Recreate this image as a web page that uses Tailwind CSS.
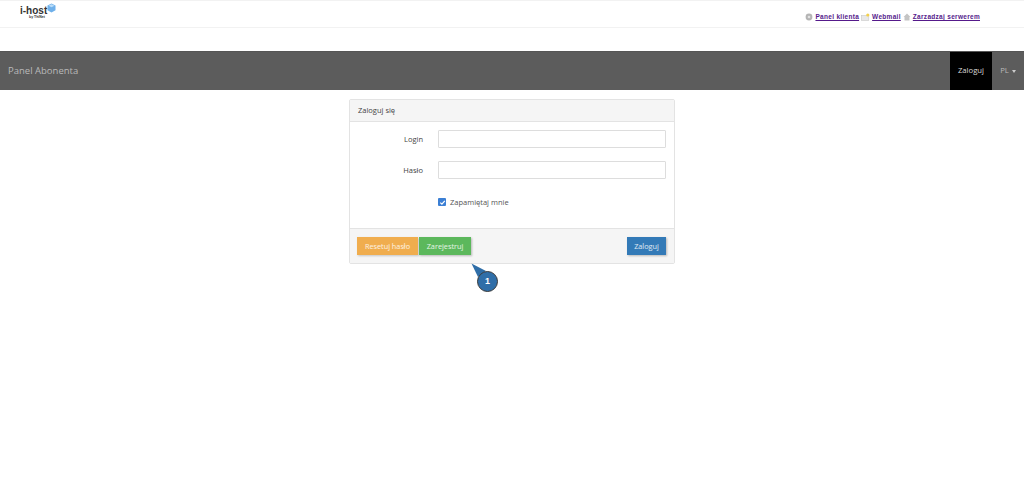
<!DOCTYPE html>
<html lang="en">
<head>
    <meta charset="UTF-8">
    <title>Panel Abonenta</title>
    <script src="https://cdn.jsdelivr.net/npm/@tailwindcss/browser@4"></script>
</head>
<body class="bg-white h-[478px] overflow-hidden font-['Open_Sans',sans-serif] text-[#333]">
    <!-- top strip -->
    <div class="h-[28px] border-y border-[#f2f2f2] flex justify-between">
        <div class="relative ml-[20px] w-[40px]">
            <span class="absolute left-0 top-[4px] font-['Liberation_Sans',sans-serif] font-bold text-[10px] leading-[12px] text-[#333]">i-host</span>
            <span class="absolute left-[9px] top-[14px] font-['Liberation_Sans',sans-serif] font-bold text-[3.5px] leading-[4px] text-[#333] whitespace-nowrap">by ThiNet</span>
            <svg class="absolute left-[27px] top-[2px]" width="9" height="10" viewBox="0 0 9 10">
                <path d="M4.5 0.5 8.5 2.5V7.2L4.5 9.5 0.5 7.2V2.5Z" fill="#6fb0ea"/>
                <path d="M1.5 2.8 4.5 1.3 7.5 2.8 4.5 4.3Z" fill="#b9dcf8"/>
            </svg>
        </div>
        <div class="flex items-center pr-[44px] pt-[6px] font-['Liberation_Sans',sans-serif] font-bold text-[6.5px] leading-[8px] text-[#551a8b] tracking-[0.3px]">
            <a href="#" class="flex items-center underline gap-[2px]">
                <svg width="8" height="8" viewBox="0 0 8 8"><circle cx="4" cy="4" r="3.4" fill="#b5b5b5"/><circle cx="4" cy="4" r="1.3" fill="#e2e2e2"/></svg>
                <span>Panel klienta</span>
            </a>
            <a href="#" class="flex items-center underline gap-[2px] ml-[2px]">
                <svg width="9" height="8" viewBox="0 0 9 8"><rect x="0.3" y="2.5" width="7.5" height="5" fill="#e8e8e8" stroke="#c8c8c8" stroke-width="0.6"/><circle cx="6.8" cy="2" r="1.6" fill="#f4d04a"/></svg>
                <span>Webmail</span>
            </a>
            <a href="#" class="flex items-center underline gap-[2px] ml-[2px]">
                <svg width="8" height="8" viewBox="0 0 8 8"><path d="M4 0.5 7.5 4H6.5V7.5H1.5V4H0.5Z" fill="#c4c4c4"/></svg>
                <span>Zarzadzaj serwerem</span>
            </a>
        </div>
    </div>

    <!-- navbar -->
    <nav class="mt-[23px] h-[39px] bg-[#5c5c5c] border-t border-[#555] flex justify-between items-stretch">
        <span class="self-center pl-[8px] text-[9.5px] text-[#b9b9b9]">Panel Abonenta</span>
        <div class="flex items-stretch">
            <a href="#" class="w-[42px] bg-black flex items-center justify-center text-[7.7px] text-[#d8d8d8]">Zaloguj</a>
            <a href="#" class="w-[32px] flex items-center justify-center gap-[3px] text-[7.7px] text-[#b9b9b9]">
                PL
                <span class="w-0 h-0 border-x-[2.5px] border-x-transparent border-t-[3px] border-t-[#ccc]"></span>
            </a>
        </div>
    </nav>

    <!-- login card -->
    <div class="relative w-[326px] ml-[349px] mt-[9px] h-[165px] border border-[#e3e3e3] rounded-[2px] flex flex-col">
        <div class="h-[22px] shrink-0 bg-[#f5f5f5] border-b border-[#e3e3e3] flex items-center pl-[8px] text-[7.5px] text-[#444]">Zaloguj się</div>

        <form class="flex-1 flex flex-col pt-[8px] text-[7.5px]">
            <div class="flex items-center h-[18px] mb-[13px]">
                <label class="w-[73px] pt-[1px] text-right font-medium text-[#444]">Login</label>
                <input type="text" class="ml-[15px] w-[228px] h-[18px] border border-[#ddd] rounded-[1px]">
            </div>
            <div class="flex items-center h-[18px] mb-[14px]">
                <label class="w-[73px] pt-[1px] text-right font-medium text-[#444]">Hasło</label>
                <input type="password" class="ml-[15px] w-[228px] h-[18px] border border-[#ddd] rounded-[1px]">
            </div>
            <div class="flex items-center pl-[88px] h-[18px] text-[#555]">
                <span class="w-[8px] h-[8px] rounded-[1px] bg-[#3b7fd4] flex items-center justify-center mr-[4px]">
                    <svg width="7" height="7" viewBox="0 0 7 7"><path d="M1.3 3.6 2.9 5.2 5.8 1.8" fill="none" stroke="#fff" stroke-width="1.2"/></svg>
                </span>
                <span class="pt-[1px]">Zapamiętaj mnie</span>
            </div>
        </form>

        <div class="h-[35px] shrink-0 bg-[#f5f5f5] border-t border-[#e3e3e3] flex items-center pl-[7px] pr-[8px] text-[7.3px] text-white/85">
            <button type="button" class="w-[61px] h-[18px] bg-[#f0ad4e] shadow-[1px_1px_2px_rgba(0,0,0,0.2)]">Resetuj hasło</button>
            <button type="button" class="ml-[1px] w-[52px] h-[18px] bg-[#5cb85c] shadow-[1px_1px_2px_rgba(0,0,0,0.25)]">Zarejestruj</button>
            <button type="button" class="ml-auto w-[39px] h-[18px] bg-[#337ab7] shadow-[1px_1px_2px_rgba(0,0,0,0.25)]">Zaloguj</button>
        </div>

        <!-- annotation marker -->
        <svg class="absolute left-[120px] top-[162px]" width="32" height="32" viewBox="0 0 32 32">
            <path d="M1.5 1.5 16 9 8 15Z" fill="#2f6ea8"/>
        </svg>
        <div class="absolute left-[127px] top-[171px] w-[21px] h-[21px] rounded-full bg-[#2f6ea8] border-[1.5px] border-[#3a3a3a] flex items-center justify-center text-[9px] font-bold text-white font-['Liberation_Sans',sans-serif]">1</div>
    </div>
</body>
</html>
